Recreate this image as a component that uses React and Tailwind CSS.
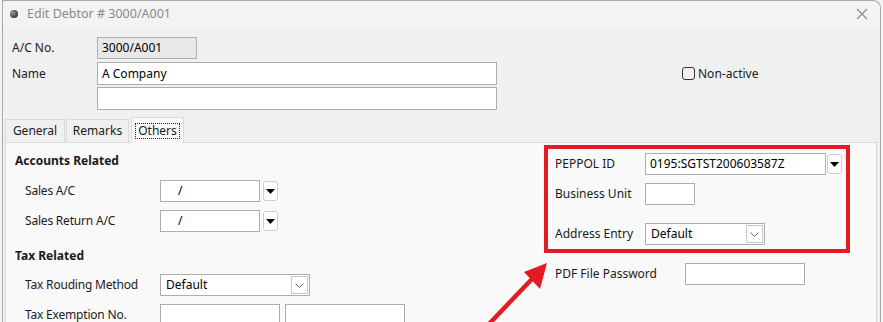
const font = { fontFamily: '"Noto Sans", "Open Sans", sans-serif' };

function DropButton() {
  return (
    <span className="flex h-[20px] w-[15px] shrink-0 items-center justify-center rounded-[3px] border border-[#cfcfcf] bg-white">
      <svg width="9" height="5" viewBox="0 0 9 5">
        <path d="M0 0 H9 L4.5 5 Z" fill="#000" />
      </svg>
    </span>
  );
}

function TextBox({ width, value, className = "" }) {
  return (
    <div
      className={`flex h-[22px] shrink-0 items-center border border-[#adadad] bg-white px-[4px] text-[12px] text-black ${className}`}
      style={{ width }}
    >
      {value}
    </div>
  );
}

function SelectBox({ width, value }) {
  return (
    <div
      className="flex h-[22px] shrink-0 items-center justify-between border border-[#adadad] bg-white pl-[5px] pr-[1px] text-[12px] text-black"
      style={{ width }}
    >
      <span>{value}</span>
      <span className="flex h-[18px] w-[17px] items-center justify-center border border-[#c8c8c8] bg-white">
        <svg width="9" height="5" viewBox="0 0 9 5">
          <path d="M0.5 0.5 L4.5 4.5 L8.5 0.5" fill="none" stroke="#707070" strokeWidth="1" />
        </svg>
      </span>
    </div>
  );
}

function LeftRow({ label, children, className = "" }) {
  return (
    <div className={`flex h-[22px] items-center ${className}`}>
      <span className="w-[145px] shrink-0 pl-[10px] text-[12px] tracking-[-0.2px] text-[#1b1b1b]">{label}</span>
      {children}
    </div>
  );
}

export default function App() {
  return (
    <div className="relative h-[322px] w-[883px] overflow-hidden bg-[#f4f4f4]" style={font}>
      <div className="ml-[2px] flex h-full w-[879px] flex-col rounded-tr-[8px] border-l border-r border-t border-[#a9a9a9] bg-[#f0f0f0]">
        <div className="flex h-[26px] shrink-0 items-center rounded-tr-[8px] bg-[#f3f3f3] pl-[7px] pr-[8px]">
          <span className="h-[8px] w-[8px] rounded-full bg-[radial-gradient(circle_at_35%_35%,#9a9a9a,#3a3a3a_70%)]" />
          <span className="ml-[9px] text-[12.5px] text-[#8a8a8a]">Edit Debtor # 3000/A001</span>
          <span className="ml-auto mr-[4px] flex items-center">
            <svg width="12" height="12" viewBox="0 0 12 12">
              <path d="M1 1 L11 11 M11 1 L1 11" stroke="#8a8a8a" strokeWidth="1.1" />
            </svg>
          </span>
        </div>

        <div className="pl-[9px] pt-[10px] text-[12px] text-[#1b1b1b]">
          <div className="flex h-[22px] items-center">
            <span className="w-[85px]">A/C No.</span>
            <div className="flex h-[22px] w-[100px] items-center border border-[#a5b1bd] bg-[#e9e9e9] px-[4px] text-black">
              3000/A001
            </div>
          </div>
          <div className="mt-[3px] flex h-[23px] items-center">
            <span className="w-[85px]">Name</span>
            <TextBox width={400} value="A Company" className="h-[23px]" />
            <span className="ml-[185px] flex items-center">
              <span className="h-[13px] w-[13px] rounded-[3px] border border-[#333]" />
              <span className="ml-[3px]">Non-active</span>
            </span>
          </div>
          <div className="mt-[2px] flex h-[23px] items-center">
            <span className="w-[85px]" />
            <TextBox width={400} value="" className="h-[23px]" />
          </div>
        </div>

        <div className="ml-[2px] mt-[7px] flex h-[25px] items-end text-[12px] text-[#1b1b1b]">
          <span className="flex h-[23px] w-[60px] items-center justify-center border border-b-0 border-[#d9d9d9] bg-[#f0f0f0]">General</span>
          <span className="ml-[1px] flex h-[23px] w-[63px] items-center justify-center border border-b-0 border-[#d9d9d9] bg-[#f0f0f0]">Remarks</span>
          <span className="relative z-10 -mb-px ml-[2px] flex h-[26px] w-[53px] items-center justify-center border border-b-0 border-[#d9d9d9] bg-[#f9f9f9]">
            <span className="border border-dotted border-[#222] px-[2px] leading-[14px]">Others</span>
          </span>
        </div>

        <div className="ml-[2px] flex w-[872px] flex-1 border border-b-0 border-[#d9d9d9] bg-[#f9f9f9]">
          <div className="w-[538px] shrink-0 pl-[9px] pt-[10px]">
            <div className="h-[16px] text-[12px] font-bold leading-[16px] text-[#1b1b1b]">Accounts Related</div>
            <LeftRow label="Sales A/C" className="mt-[11px]">
              <TextBox width={100} value={<span className="pl-[13px]">/</span>} />
              <span className="ml-[3px]"><DropButton /></span>
            </LeftRow>
            <LeftRow label="Sales Return A/C" className="mt-[8px]">
              <TextBox width={100} value={<span className="pl-[13px]">/</span>} />
              <span className="ml-[3px]"><DropButton /></span>
            </LeftRow>
            <div className="mt-[16px] h-[16px] text-[12px] font-bold leading-[16px] text-[#1b1b1b]">Tax Related</div>
            <LeftRow label="Tax Rouding Method" className="mt-[10px]">
              <SelectBox width={150} value="Default" />
            </LeftRow>
            <LeftRow label="Tax Exemption No." className="mt-[8px]">
              <TextBox width={120} value="" />
              <TextBox width={120} value="" className="ml-[5px]" />
            </LeftRow>
          </div>

          <div className="pt-[2px] text-[12px] text-[#1b1b1b]">
            <div className="w-[306px] border-[4px] border-[#e31b23] pb-[4px] pl-[7px] pt-[4px]">
              <div className="flex h-[22px] items-center">
                <span className="w-[90px] shrink-0">PEPPOL ID</span>
                <TextBox width={181} value="0195:SGTST200603587Z" />
                <span className="ml-[1px]"><DropButton /></span>
              </div>
              <div className="mt-[8px] flex h-[22px] items-center">
                <span className="w-[90px] shrink-0">Business Unit</span>
                <TextBox width={50} value="" />
              </div>
              <div className="mt-[18px] flex h-[22px] items-center">
                <span className="w-[90px] shrink-0">Address Entry</span>
                <SelectBox width={120} value="Default" />
              </div>
            </div>
            <div className="mt-[10px] flex h-[22px] items-center pl-[11px]">
              <span className="w-[130px] shrink-0">PDF File Password</span>
              <TextBox width={120} value="" />
            </div>
          </div>
        </div>
      </div>

      <svg className="pointer-events-none absolute left-0 top-0" width="883" height="322" viewBox="0 0 883 322">
        <path d="M489 324 L532 279" stroke="#e31b23" strokeWidth="4.5" />
        <path d="M547 263 L524 272 L540 289 Z" fill="#e31b23" />
      </svg>
    </div>
  );
}
